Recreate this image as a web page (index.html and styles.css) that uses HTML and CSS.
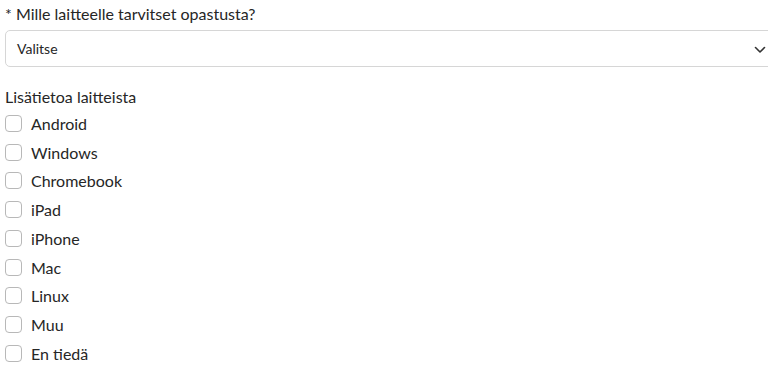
FILE: index.html
```html
<!DOCTYPE html>
<html lang="fi">
<head>
<meta charset="utf-8">
<link rel="stylesheet" href="styles.css">
</head>
<body>
<div class="form">
  <div class="field">
    <label class="field-label" for="device">* Mille laitteelle tarvitset opastusta?</label>
    <div class="select">
      <span class="select-value">Valitse</span>
      <svg class="chevron" width="12" height="8" viewBox="0 0 12 8"><path d="M1.5 1.5 L6 6 L10.5 1.5" fill="none" stroke="#333" stroke-width="1.6" stroke-linecap="round" stroke-linejoin="round"/></svg>
    </div>
  </div>
  <fieldset class="group">
    <legend class="group-label">Lisätietoa laitteista</legend>
    <label class="check"><input type="checkbox"><span>Android</span></label>
    <label class="check"><input type="checkbox"><span>Windows</span></label>
    <label class="check"><input type="checkbox"><span>Chromebook</span></label>
    <label class="check"><input type="checkbox"><span>iPad</span></label>
    <label class="check"><input type="checkbox"><span>iPhone</span></label>
    <label class="check"><input type="checkbox"><span>Mac</span></label>
    <label class="check"><input type="checkbox"><span>Linux</span></label>
    <label class="check"><input type="checkbox"><span>Muu</span></label>
    <label class="check"><input type="checkbox"><span>En tiedä</span></label>
  </fieldset>
</div>
</body>
</html>
```
FILE: styles.css
```css
html, body {
  margin: 0;
  padding: 0;
  background: #fff;
}
body {
  font-family: Lato, "Open Sans", sans-serif;
  color: #262626;
  font-size: 16px;
  overflow: hidden;
}
.form {
  padding: 2px 0 0 5px;
}
.field-label {
  display: block;
  line-height: 24px;
  height: 24px;
}
.select {
  margin-top: 4px;
  height: 35px;
  width: 775px;
  box-sizing: content-box;
  border: 1px solid #d6d6d6;
  border-radius: 5px;
  display: flex;
  align-items: center;
  padding: 0 0 0 11px;
  position: relative;
  font-size: 14px;
}
.select-value {
  flex: 1;
}
.chevron {
  position: absolute;
  left: 748px;
  top: 15px;
}
.group {
  border: 0;
  margin: 0;
  padding: 0;
  margin-top: 18px;
}
.group-label {
  padding: 0;
  line-height: 24px;
}
.check {
  display: flex;
  align-items: center;
  height: 28.75px;
  gap: 9px;
}
.check input {
  appearance: none;
  -webkit-appearance: none;
  margin: 0;
  width: 17px;
  height: 17px;
  border: 1px solid #b8b8b8;
  border-radius: 4px;
  background: #fff;
  box-sizing: border-box;
}
```
